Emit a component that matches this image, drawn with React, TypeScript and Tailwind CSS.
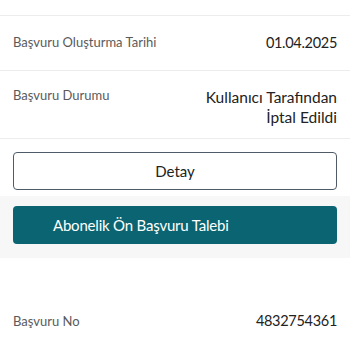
import React from "react";

export default function App() {
  const font = { fontFamily: "Lato, 'Noto Sans', sans-serif" };
  return (
    <div className="w-[350px] h-[350px] bg-white overflow-hidden" style={font}>
      <div className="h-[16px] border-b border-[#ececec]" />
      <div className="h-[55px] px-[13px] flex items-center justify-between border-b border-[#ececec]">
        <span className="text-[13px] text-[#5a5a5a]">Başvuru Oluşturma Tarihi</span>
        <span className="text-[14.5px] tracking-[-0.3px] text-[#222]">01.04.2025</span>
      </div>
      <div className="h-[68px] px-[13px] pt-[16px] flex justify-between border-b border-[#ececec]">
        <span className="text-[13px] text-[#5a5a5a] leading-[20px] -mt-[2px]">Başvuru Durumu</span>
        <span className="text-[15.5px] text-[#222] text-right leading-[20px]">
          Kullanıcı Tarafından
          <br />
          İptal Edildi
        </span>
      </div>
      <div className="px-[13px] pt-[13px] pb-[6px]">
        <div className="h-[38px] border border-[#4f5b66] rounded-[4px] flex items-center justify-center text-[15px] text-[#222]">
          Detay
        </div>
      </div>
      <div className="bg-[#f7f7f7] px-[13px] pt-[10px] pb-[14px]">
        <div className="h-[38px] bg-[#0b6472] rounded-[4px] flex items-center pl-[40px] text-[15px] tracking-[-0.2px] text-white">
          Abonelik Ön Başvuru Talebi
        </div>
      </div>
      <div className="h-[92px] px-[13px] pt-[53px] flex justify-between items-start">
        <span className="text-[13px] text-[#5a5a5a] leading-[20px]">Başvuru No</span>
        <span className="text-[14.5px] tracking-[-0.3px] text-[#222] leading-[20px]">4832754361</span>
      </div>
    </div>
  );
}
